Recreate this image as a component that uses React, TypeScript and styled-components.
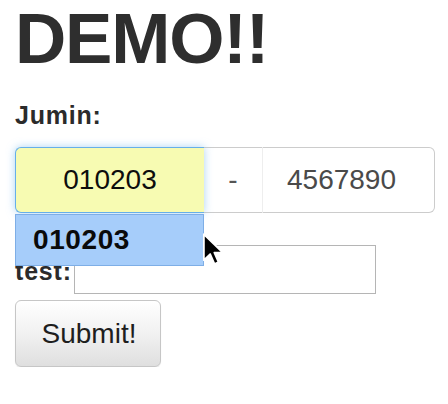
import React from "react";
import styled, { createGlobalStyle } from "styled-components";

const Global = createGlobalStyle`
  html, body { margin: 0; padding: 0; background: #fff; }
  body { font-family: "Liberation Sans", Arial, sans-serif; color: #333; }
  * { box-sizing: border-box; }
`;

const Page = styled.div`
  display: flex;
  flex-direction: column;
  align-items: flex-start;
  padding: 0 13px 0 15px;
  width: 448px;
`;

const Title = styled.h1`
  margin: -1px 0 0 0;
  font-size: 71px;
  line-height: 79px;
  font-weight: 700;
  letter-spacing: -1.2px;
  color: #2e2e2e;
`;

const Label = styled.label`
  display: block;
  font-size: 25px;
  line-height: 30px;
  font-weight: 700;
  letter-spacing: 0.8px;
  color: #2b2b2b;
`;

const JuminLabel = styled(Label)`
  margin-top: 22px;
  margin-bottom: 17px;
`;

const GroupWrap = styled.div`
  position: relative;
  width: 420px;
`;

const Group = styled.div`
  display: flex;
  height: 66px;
  width: 420px;
`;

const Cell = styled.div<{ $w: number; $align: string; $pl?: number; $color: string }>`
  width: ${(p) => p.$w}px;
  height: 66px;
  display: flex;
  align-items: center;
  justify-content: ${(p) => p.$align};
  padding-left: ${(p) => p.$pl ?? 0}px;
  font-size: 28px;
  line-height: 28px;
  color: ${(p) => p.$color};
  background: #fff;
  border-top: 1px solid #cccccc;
  border-bottom: 1px solid #cccccc;
`;

const FocusCell = styled(Cell)`
  background: #f7fbb2;
  border: 1px solid #66afe9;
  border-right: none;
  border-radius: 6px 0 0 6px;
  box-shadow: 0 0 8px rgba(102, 175, 233, 0.55);
  position: relative;
  z-index: 1;
`;

const LastCell = styled(Cell)`
  border-left: 1px solid #eeeeee;
  border-right: 1px solid #cccccc;
  border-radius: 0 6px 6px 0;
`;

const Suggest = styled.div`
  position: absolute;
  left: 0;
  top: 67px;
  width: 189px;
  height: 52px;
  background: #a6cdfa;
  border: 1px solid #7eaee6;
  display: flex;
  align-items: center;
  padding-left: 17px;
  font-size: 28px;
  line-height: 28px;
  font-weight: 700;
  letter-spacing: 0.6px;
  color: #0a0a0a;
  z-index: 5;
`;

const Cursor = styled.svg`
  position: absolute;
  left: 186px;
  top: 85px;
  z-index: 6;
`;

const TestRow = styled.div`
  display: flex;
  align-items: flex-end;
  margin-top: 32px;
  gap: 2px;
`;

const TestLabel = styled(Label)`
  margin-bottom: 8px;
`;

const TextBox = styled.input`
  width: 302px;
  height: 49px;
  border: 1px solid #b5b5b5;
  background: #fff;
  outline: none;
  padding: 0;
  font-size: 18px;
`;

const SubmitButton = styled.button`
  margin-top: 6px;
  width: 146px;
  height: 67px;
  border: 1px solid #c6c6c6;
  border-radius: 6px;
  background: linear-gradient(#ffffff 0%, #f1f1f1 50%, #dfdfdf 100%);
  box-shadow: 0 1px 1px rgba(0, 0, 0, 0.08);
  font-family: "Liberation Sans", Arial, sans-serif;
  font-size: 28px;
  line-height: 28px;
  color: #1e1e1e;
  padding: 0 0 0 2px;
`;

export default function App() {
  return (
    <>
      <Global />
      <Page>
        <Title>DEMO!!</Title>
        <JuminLabel>Jumin:</JuminLabel>
        <GroupWrap>
          <Group>
            <FocusCell $w={189} $align="center" $color="#0d0d0d">010203</FocusCell>
            <Cell $w={58} $align="center" $color="#555">-</Cell>
            <LastCell $w={173} $align="flex-start" $pl={24} $color="#4a4a4a">4567890</LastCell>
          </Group>
          <Suggest>010203</Suggest>
          <Cursor width="26" height="36" viewBox="0 0 22 32">
            <path
              d="M2 2 L2 25 L7.6 19.6 L11.4 28.4 L15 26.8 L11.3 18.3 L18.8 18.3 Z"
              fill="#000"
              stroke="#fff"
              strokeWidth="1.6"
              strokeLinejoin="round"
            />
          </Cursor>
        </GroupWrap>
        <TestRow>
          <TestLabel>test:</TestLabel>
          <TextBox type="text" />
        </TestRow>
        <SubmitButton>Submit!</SubmitButton>
      </Page>
    </>
  );
}
